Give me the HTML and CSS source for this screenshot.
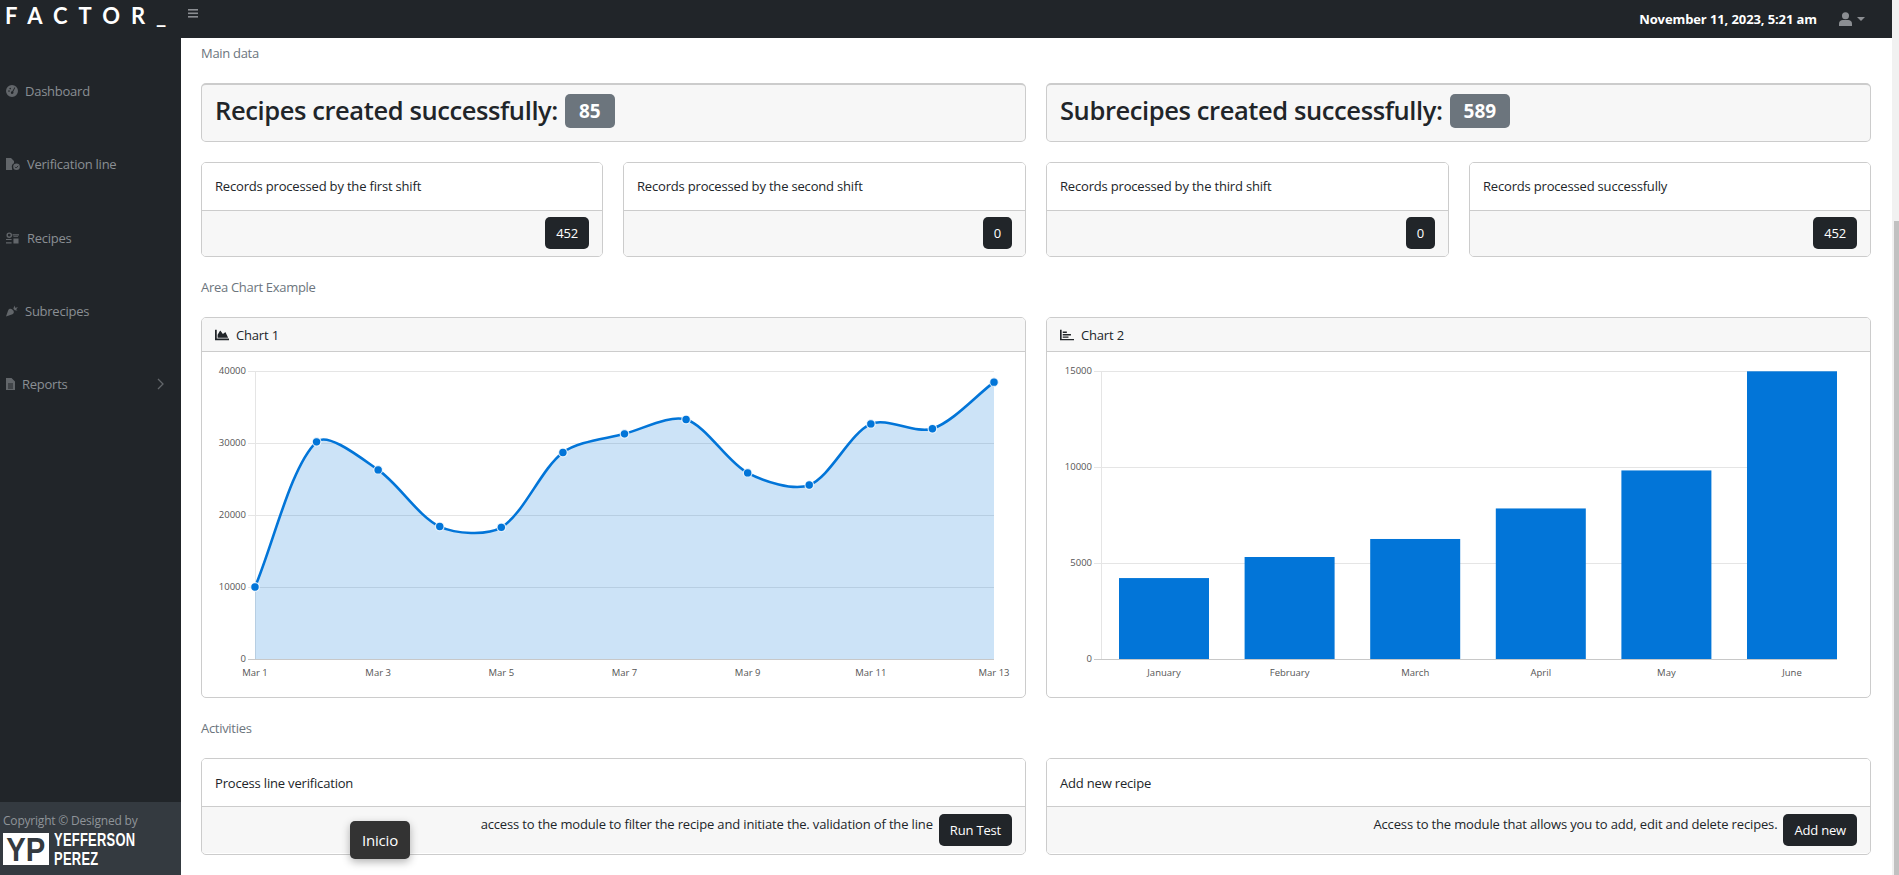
FILE: index.html
```html
<!DOCTYPE html>
<html lang="en">
<head>
  <meta charset="UTF-8">
  <title>Factor - Dashboard</title>
  <link rel="stylesheet" href="styles.css">
</head>
<body>

<div class="page">
  <header class="topbar">
    <a class="brand">FACTOR_</a>
    <svg class="menu-icon" viewBox="0 0 10 9"><rect width="10" height="1.6" y="0"/><rect width="10" height="1.6" y="3.5"/><rect width="10" height="1.6" y="7"/></svg>
    <span class="date">November 11, 2023, 5:21 am</span>
    <svg class="user-icon" viewBox="0 0 14 15"><circle cx="7" cy="4" r="3.8"/><path d="M0 15v-2.5C0 10 2 8.600 4 8.600h6c2 0 4 1.400 4 3.900V15z"/></svg>
    <span class="caret"></span>
  </header>

  <div class="layout">
    <aside class="sidebar">
      <nav class="side-nav">
        <a class="side-link link-dashboard">
          <svg viewBox="0 0 12 12"><path fill-rule="evenodd" d="M6 0a6 6 0 1 1 0 12A6 6 0 0 1 6 0zm2.600 2.300L6.300 6.200a1.300 1.300 0 1 0 .9.500l2-3.900zM3 5.300a.8.800 0 1 0 0 1.600.8.800 0 0 0 0-1.600zm1.200-2.500a.8.800 0 1 0 0 1.600.8.800 0 0 0 0-1.600z"/></svg>
          Dashboard
        </a>
        <a class="side-link link-verification">
          <svg viewBox="0 0 14 12"><path d="M0 0h5l3 3v2.300A4 4 0 0 0 6 10a4 4 0 0 0 .3 2H0z"/><circle cx="10.500" cy="8.700" r="3.300"/><path d="M9 8.800l1.200 1.200 2-2.200" fill="none" stroke="#212529" stroke-width=".9"/></svg>
          Verification line
        </a>
        <a class="side-link link-recipes">
          <svg viewBox="0 0 14 12"><path fill-rule="evenodd" d="M3.500 0a3 3 0 1 1 0 6 3 3 0 0 1 0-6zm0 1.500a1.500 1.500 0 1 0 0 3 1.500 1.500 0 0 0 0-3z"/><path d="M7 2h7v1.200H7zM8 4h5v1H8zM0 7h6v1.200H0zM0 10.500h6V12H0zM8 6.500h5.500V12H8z"/></svg>
          Recipes
        </a>
        <a class="side-link link-subrecipes">
          <svg viewBox="0 0 13 12"><path d="M0 12l2.500-7c.7-1.600 2.800-2 4-.8l1.300 1.300c1.200 1.200.8 3.300-.8 4z"/><path d="M8 3.500L9 0l1 2.500L13 2l-2 2 1.500 1.500-3-.4z"/></svg>
          Subrecipes
        </a>
        <a class="side-link link-reports">
          <svg viewBox="0 0 9 12"><path fill-rule="evenodd" d="M0 0h5.500L9 3.500V12H0zm2 5.500v1h5v-1zm0 2v1h5v-1zm0 2v1h5v-1z"/></svg>
          Reports
          <svg class="chevron" viewBox="0 0 7 12"><path d="M1 1l5 5-5 5" fill="none" stroke-width="1.300"/></svg>
        </a>
      </nav>
      <footer class="side-footer">
        <div class="copyright">Copyright © Designed by</div>
        <div class="signature">
          <span class="signature-box"><span class="signature-mark">YP</span></span>
          <span class="signature-name"><span>YEFFERSON</span><span>PEREZ</span></span>
        </div>
      </footer>
    </aside>

    <main class="content">
      <div class="section-title">Main data</div>

      <div class="grid-2">
        <div class="card stat-card"><h3>Recipes created successfully: <span class="badge">85</span></h3></div>
        <div class="card stat-card"><h3>Subrecipes created successfully: <span class="badge">589</span></h3></div>
      </div>

      <div class="grid-4">
        <div class="card shift-card">
          <div class="card-top">Records processed by the first shift</div>
          <div class="card-bottom"><button class="btn">452</button></div>
        </div>
        <div class="card shift-card">
          <div class="card-top">Records processed by the second shift</div>
          <div class="card-bottom"><button class="btn">0</button></div>
        </div>
        <div class="card shift-card">
          <div class="card-top">Records processed by the third shift</div>
          <div class="card-bottom"><button class="btn">0</button></div>
        </div>
        <div class="card shift-card">
          <div class="card-top">Records processed successfully</div>
          <div class="card-bottom"><button class="btn">452</button></div>
        </div>
      </div>

      <div class="section-title">Area Chart Example</div>

      <div class="grid-2">
        <div class="card chart-card">
          <div class="chart-header">
            <svg viewBox="0 0 512 512"><path d="M500 384c6.600 0 12 5.400 12 12v40c0 6.600-5.400 12-12 12H12c-6.600 0-12-5.400-12-12V76c0-6.600 5.400-12 12-12h40c6.600 0 12 5.400 12 12v308h436zM372.700 159.500L288 216l-85.300-113.700c-5.100-6.800-15.500-6.300-19.900 1L96 248v104h384l-89.900-187.800c-3.200-6.500-11.400-8.700-17.400-4.700z"/></svg>
            Chart 1
          </div>
          <svg class="chart" id="areaChart" viewBox="0 0 823 345"></svg>
        </div>
        <div class="card chart-card">
          <div class="chart-header">
            <svg viewBox="0 0 512 512"><path d="M0 64h60v336h452v48H0zM100 130h150v50H100zM100 220h300v50H100zM100 310h210v50H100z"/></svg>
            Chart 2
          </div>
          <svg class="chart" id="barChart" viewBox="0 0 823 345"></svg>
        </div>
      </div>

      <div class="section-title">Activities</div>

      <div class="grid-2">
        <div class="card activity-card">
          <div class="card-top">Process line verification</div>
          <div class="card-bottom">
            <span class="activity-text">access to the module to filter the recipe and initiate the. validation of the line</span>
            <button class="btn">Run Test</button>
          </div>
        </div>
        <div class="card activity-card">
          <div class="card-top">Add new recipe</div>
          <div class="card-bottom">
            <span class="activity-text">Access to the module that allows you to add, edit and delete recipes.</span>
            <button class="btn">Add new</button>
          </div>
        </div>
      </div>
    </main>
  </div>

  <div class="tooltip">Inicio</div>
</div>

<div class="scrollbar"><div class="scroll-thumb"></div></div>

<script src="charts.js"></script>
</body>
</html>
```

FILE: styles.css
```css
html, body {
  height: 100%;
  overflow: hidden;
}
body {
  font-family: "Open Sans", "Noto Sans", sans-serif;
  font-size: 13px;
  letter-spacing: -0.18px;
  color: #212529;
  background-color: #fff;
  margin: 0;
  display: flex;
}
.page {
  flex: 1;
  min-width: 0;
  display: flex;
  flex-direction: column;
  position: relative;
}

/* top bar */
.topbar {
  height: 38px;
  flex: none;
  background-color: #212529;
  display: flex;
  align-items: center;
  padding: 0 27px 0 5px;
}
.brand {
  width: 183px;
  margin-top: -7px;
  font-family: "Lato", sans-serif;
  font-weight: 700;
  font-size: 22px;
  letter-spacing: 11px;
  color: #fff;
}
.menu-icon {
  width: 10px;
  height: 9px;
  margin-top: -12px;
  fill: #8b8e92;
}
.date {
  margin-left: auto;
  font-weight: 700;
  font-size: 13px;
  letter-spacing: -0.1px;
  color: #fff;
}
.user-icon {
  width: 13px;
  height: 14px;
  margin-left: 22px;
  fill: #8b8e92;
}
.caret {
  margin-left: 5px;
  border-top: 4px solid #8b8e92;
  border-left: 4px solid transparent;
  border-right: 4px solid transparent;
}

/* sidebar */
.layout {
  flex: 1;
  min-height: 0;
  display: flex;
}
.sidebar {
  width: 181px;
  flex: none;
  background-color: #212529;
  display: flex;
  flex-direction: column;
}
.side-nav {
  padding-top: 16.500px;
}
.side-link {
  height: 73.3px;
  display: flex;
  align-items: center;
  padding-left: 6px;
  color: #8a8f94;
  font-size: 13px;
  letter-spacing: -0.25px;
}
.side-link svg {
  fill: #62666a;
  stroke: #62666a;
  stroke-width: 0;
  height: 12px;
  margin-right: 7px;
  flex: none;
}
.link-dashboard svg { width: 12px; }
.link-verification svg { width: 14px; }
.link-recipes svg { width: 13px; margin-right: 8px; }
.link-subrecipes svg { width: 12px; }
.link-reports svg { width: 9px; }
.side-link .chevron {
  width: 7px;
  fill: none;
  stroke: #62666a;
  stroke-width: 1.3;
  margin: 0 17px 0 auto;
}
.side-footer {
  margin-top: auto;
  height: 73px;
  background-color: #343a40;
  padding: 10px 3px 0;
  box-sizing: border-box;
  color: #8f9499;
}
.copyright {
  font-size: 12px;
  letter-spacing: -0.2px;
  line-height: 18px;
  white-space: nowrap;
}
.signature {
  display: flex;
  align-items: flex-start;
  gap: 5px;
  margin-top: 3px;
}
.signature-box {
  width: 46px;
  height: 32px;
  background-color: #fff;
  color: #343a40;
  font-family: "Liberation Sans", sans-serif;
  font-weight: 700;
  font-size: 34px;
  line-height: 32px;
  letter-spacing: 0;
  text-align: center;
}
.signature-mark {
  display: inline-block;
  transform: scaleX(0.86);
  transform-origin: center;
}
.signature-name {
  display: flex;
  flex-direction: column;
  font-family: "Liberation Sans", sans-serif;
  font-weight: 700;
  font-size: 19px;
  line-height: 19px;
  letter-spacing: 0.4px;
  color: #fff;
  margin-top: -3px;
}
.signature-name span {
  transform: scaleX(0.68);
  transform-origin: left;
}

/* content */
.content {
  flex: 1;
  min-width: 0;
  padding: 5px 21px 0 20px;
  display: flex;
  flex-direction: column;
  gap: 20px;
  overflow: hidden;
}
.section-title {
  height: 20px;
  line-height: 20px;
  letter-spacing: -0.3px;
  color: #6c757d;
}
.grid-2 {
  display: grid;
  grid-template-columns: 825px 1fr;
  gap: 20px;
}
.grid-4 {
  display: grid;
  grid-template-columns: 402px 403px 403px 1fr;
  gap: 20px;
}
.card {
  border: 1px solid #ccc;
  border-radius: 5px;
  box-sizing: border-box;
  overflow: hidden;
}
.stat-card {
  height: 59px;
  background-color: #f7f7f7;
  border-top-width: 2px;
  padding: 0 13px 7px;
  display: flex;
  align-items: center;
}
.stat-card h3 {
  margin: 0;
  font-weight: 600;
  font-size: 25.5px;
  letter-spacing: -0.4px;
  line-height: 34px;
  display: flex;
  align-items: center;
  gap: 7px;
}
.badge {
  display: inline-block;
  height: 34px;
  line-height: 34px;
  margin-top: 3px;
  padding: 0 14px;
  border-radius: 5px;
  background-color: #6c757d;
  color: #fff;
  font-weight: 700;
  font-size: 19px;
  letter-spacing: 0;
}
.card-top {
  height: 47px;
  line-height: 47px;
  padding: 0 13px;
  background-color: #fff;
  border-bottom: 1px solid #ccc;
}
.card-bottom {
  background-color: #f7f7f7;
  display: flex;
  justify-content: flex-end;
  padding: 6px 13px 7px;
}
.shift-card {
  height: 95px;
}
.activity-card {
  height: 97px;
}
.activity-card .card-top {
  line-height: 48px;
}
.activity-card .card-bottom {
  align-items: flex-start;
  gap: 6px;
  padding-top: 7px;
}
.activity-text {
  line-height: 20px;
  letter-spacing: -0.15px;
}
.btn {
  height: 32px;
  padding: 0 11px;
  border: none;
  border-radius: 5px;
  background-color: #212529;
  color: #fff;
  font-family: inherit;
  font-size: 13px;
  letter-spacing: -0.18px;
}
.chart-card {
  height: 381px;
}
.chart-header {
  height: 33px;
  background-color: #f7f7f7;
  border-bottom: 1px solid #ccc;
  display: flex;
  align-items: center;
  padding: 0 13px;
  gap: 7px;
}
.chart-header svg {
  width: 14px;
  height: 14px;
  fill: #212529;
}
.chart {
  display: block;
  width: 100%;
  height: 345px;
}
.chart text {
  font-family: "Open Sans", sans-serif;
  font-size: 9.500px;
  letter-spacing: 0;
  fill: #555;
}
.grid-line {
  stroke: #e5e5e5;
  stroke-width: 1;
}
.axis-line {
  stroke: #c8c8c8;
  stroke-width: 1;
}
.area-fill {
  fill: rgba(2, 117, 216, 0.2);
}
.area-line {
  fill: none;
  stroke: #0275d8;
  stroke-width: 2.6;
}
.area-point {
  fill: #0275d8;
  stroke: rgba(255, 255, 255, 0.8);
  stroke-width: 1.2;
}
.bar {
  fill: #0275d8;
}

/* overlay */
.tooltip {
  position: absolute;
  left: 350px;
  top: 821px;
  width: 60px;
  height: 38px;
  line-height: 38px;
  text-align: center;
  background-color: #333;
  color: #fff;
  font-size: 15px;
  border-radius: 5px;
  box-shadow: 0 3px 8px rgba(0, 0, 0, 0.3);
}

/* the window scrollbar of the screenshot */
.scrollbar {
  width: 7px;
  flex: none;
  background-color: #f1f1f1;
  display: flex;
  flex-direction: column;
  justify-content: flex-end;
}
.scroll-thumb {
  height: 654px;
  margin-left: 2px;
  background-color: #c1c1c1;
}
```

FILE: charts.js
```js
const SVG_TOP = 19;
const SVG_BOTTOM = 307;

function gridLines(ticks, max, left, right) {
  let out = '';
  ticks.forEach(tick => {
    const y = Math.round(SVG_BOTTOM - (tick / max) * (SVG_BOTTOM - SVG_TOP)) + 0.5;
    const cls = tick === 0 ? 'axis-line' : 'grid-line';
    out += `<line class="${cls}" x1="${left - 7}" x2="${right}" y1="${y}" y2="${y}"></line>`;
    out += `<text x="${left - 9}" y="${y + 2}" text-anchor="end">${tick}</text>`;
  });
  out += `<line class="grid-line" x1="${left + 0.5}" x2="${left + 0.5}" y1="${SVG_TOP}" y2="${SVG_BOTTOM}"></line>`;
  return out;
}

// same spline as the chart library uses, tension 0.3
function splinePath(points) {
  let d = `M${points[0].x} ${points[0].y}`;
  const controls = points.map((point, i) => {
    const prev = points[i - 1] || point;
    const next = points[i + 1] || point;
    const d01 = Math.hypot(point.x - prev.x, point.y - prev.y);
    const d12 = Math.hypot(next.x - point.x, next.y - point.y);
    const total = d01 + d12;
    const fa = 0.3 * d01 / total;
    const fb = 0.3 * d12 / total;
    return {
      inX: point.x - fa * (next.x - prev.x),
      inY: point.y - fa * (next.y - prev.y),
      outX: point.x + fb * (next.x - prev.x),
      outY: point.y + fb * (next.y - prev.y)
    };
  });
  for (let i = 1; i < points.length; i++) {
    const a = controls[i - 1];
    const b = controls[i];
    d += `C${a.outX} ${a.outY} ${b.inX} ${b.inY} ${points[i].x} ${points[i].y}`;
  }
  return d;
}

function drawAreaChart() {
  const data = [10000, 30162, 26263, 18394, 18287, 28682, 31274, 33259, 25849, 24159, 32651, 31984, 38451];
  const left = 53;
  const right = 792;
  const step = (right - left) / (data.length - 1);
  const points = data.map((value, i) => ({
    x: left + i * step,
    y: SVG_BOTTOM - (value / 40000) * (SVG_BOTTOM - SVG_TOP)
  }));
  const line = splinePath(points);

  let out = gridLines([0, 10000, 20000, 30000, 40000], 40000, left, right);
  out += `<path class="area-fill" d="${line}L${right} ${SVG_BOTTOM}L${left} ${SVG_BOTTOM}Z"></path>`;
  out += `<path class="area-line" d="${line}"></path>`;
  points.forEach(point => {
    out += `<circle class="area-point" cx="${point.x}" cy="${point.y}" r="4.3"></circle>`;
  });
  points.forEach((point, i) => {
    if (i % 2 === 0) {
      out += `<text x="${point.x}" y="324" text-anchor="middle">Mar ${i + 1}</text>`;
    }
  });
  document.getElementById('areaChart').innerHTML = out;
}

function drawBarChart() {
  const data = [4215, 5312, 6251, 7841, 9821, 14984];
  const labels = ['January', 'February', 'March', 'April', 'May', 'June'];
  const left = 54;
  const right = 790;

  let out = gridLines([0, 5000, 10000, 15000], 15000, left, right);
  data.forEach((value, i) => {
    const center = 117 + i * 125.6;
    const height = (value / 15000) * (SVG_BOTTOM - SVG_TOP);
    out += `<rect class="bar" x="${center - 45}" y="${SVG_BOTTOM - height}" width="90" height="${height}"></rect>`;
    out += `<text x="${center}" y="324" text-anchor="middle">${labels[i]}</text>`;
  });
  document.getElementById('barChart').innerHTML = out;
}

drawAreaChart();
drawBarChart();
```
